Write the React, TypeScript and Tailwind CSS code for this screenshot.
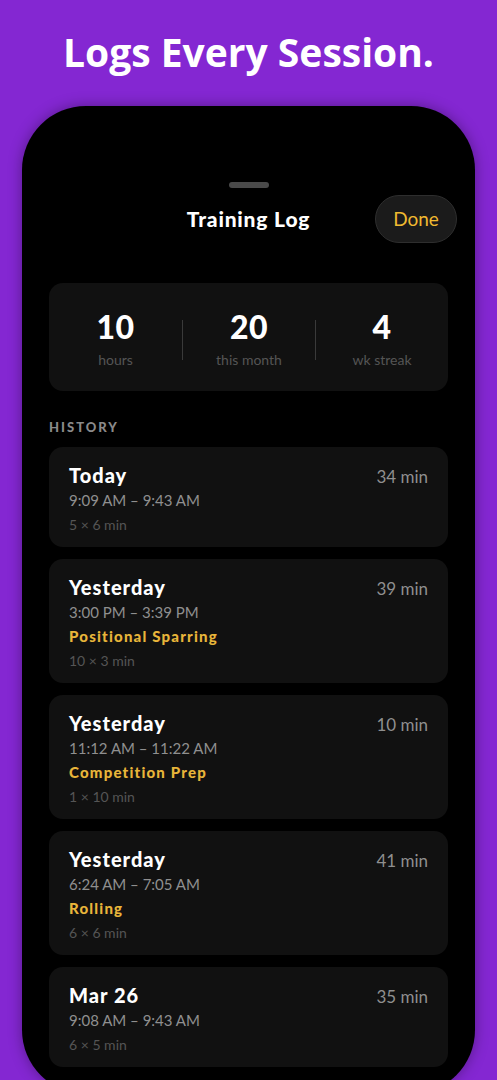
const sessions = [
  { day: "Today", time: "9:09 AM – 9:43 AM", drill: "", sets: "5 × 6 min", total: "34 min" },
  { day: "Yesterday", time: "3:00 PM – 3:39 PM", drill: "Positional Sparring", sets: "10 × 3 min", total: "39 min" },
  { day: "Yesterday", time: "11:12 AM – 11:22 AM", drill: "Competition Prep", sets: "1 × 10 min", total: "10 min" },
  { day: "Yesterday", time: "6:24 AM – 7:05 AM", drill: "Rolling", sets: "6 × 6 min", total: "41 min" },
  { day: "Mar 26", time: "9:08 AM – 9:43 AM", drill: "", sets: "6 × 5 min", total: "35 min" },
];

const stats = [
  { value: "10", label: "hours" },
  { value: "20", label: "this month" },
  { value: "4", label: "wk streak" },
];

function StatsCard() {
  return (
    <div className="mx-[27px] mt-[40px] flex items-center rounded-[14px] bg-[#111111] pt-[26px] pb-[21px]">
      {stats.map((s, i) => (
        <div key={s.label} className="flex flex-1 items-center">
          {i > 0 && <div className="h-[40px] w-px bg-[#3a3a3a]" />}
          <div className="flex flex-1 flex-col items-center">
            <span className="text-[32px] leading-[36px] font-black tracking-[0.5px] text-white">{s.value}</span>
            <span className="mt-[5px] text-[14px] leading-[20px] text-[#555555]">{s.label}</span>
          </div>
        </div>
      ))}
    </div>
  );
}

function SessionCard({ day, time, drill, sets, total }: (typeof sessions)[number]) {
  return (
    <div className="flex justify-between rounded-[14px] bg-[#111111] px-[20px] pt-[16px] pb-[12px]">
      <div className="flex flex-col">
        <span className="text-[20px] leading-[24px] font-black tracking-[1px] text-white">{day}</span>
        <span className="mt-[2px] text-[15px] leading-[22px] text-[#8f8f8f]">{time}</span>
        {drill && (
          <span className="mt-[2px] text-[15px] leading-[22px] font-black tracking-[1.2px] text-[#e8b53a]">
            {drill}
          </span>
        )}
        <span className="mt-[4px] text-[14px] leading-[20px] text-[#555555]">{sets}</span>
      </div>
      <span className="mt-[2px] text-[17px] leading-[24px] text-[#8f8f8f]">{total}</span>
    </div>
  );
}

export default function App() {
  return (
    <div className="flex h-[1080px] w-[497px] flex-col items-center overflow-hidden bg-[#8427d2] font-['Lato',sans-serif]">
      <h1 className="mt-[28px] font-['Open_Sans',sans-serif] text-[39px] leading-[48px] font-bold text-white">
        Logs Every Session.
      </h1>

      <div className="mt-[30px] h-[988px] w-[453px] shrink-0 rounded-[64px] bg-black shadow-[0_0_14px_rgba(0,0,0,0.35)]">
        <div className="flex justify-center pt-[76px]">
          <div className="h-[6px] w-[40px] rounded-full bg-[#4a4a4a]" />
        </div>

        <div className="mt-[7px] grid grid-cols-[1fr_auto_1fr] items-center">
          <div />
          <span className="text-[21px] font-black tracking-[0.8px] text-white">Training Log</span>
          <div className="flex justify-end pr-[18px]">
            <button className="h-[48px] w-[82px] rounded-full border border-[#2e2e2e] bg-[#1b1b1b] text-[19px] text-[#f0b930]">
              Done
            </button>
          </div>
        </div>

        <StatsCard />

        <div className="mx-[27px] mt-[28px] text-[13px] leading-[16px] font-black tracking-[2px] text-[#8a8a8a]">
          HISTORY
        </div>

        <div className="mx-[27px] mt-[12px] flex flex-col gap-[12px]">
          {sessions.map((s, i) => (
            <SessionCard key={i} {...s} />
          ))}
        </div>
      </div>
    </div>
  );
}
